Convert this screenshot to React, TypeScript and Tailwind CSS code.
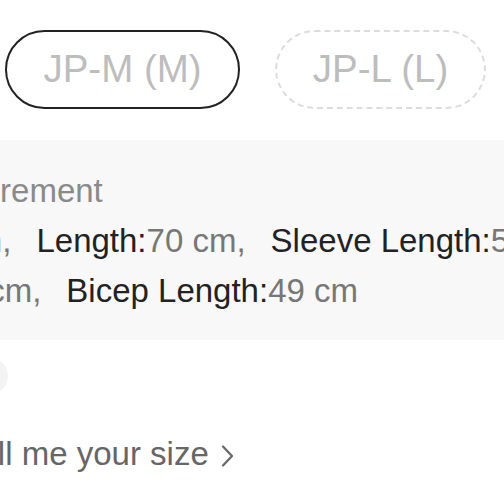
const font = { fontFamily: '"Liberation Sans", Arial, sans-serif' };

interface Measure {
  label: string;
  value: string;
}

const rowOne: Measure[] = [
  { label: 'Chest:', value: '56 cm' },
  { label: 'Length:', value: '70 cm' },
  { label: 'Sleeve Length:', value: '58 cm' },
];

const rowTwo: Measure[] = [
  { label: 'Shoulder:', value: '46 cm' },
  { label: 'Bicep Length:', value: '49 cm' },
];

function MeasureRow({ items, className }: { items: Measure[]; className: string }) {
  return (
    <div className={`flex gap-[25px] whitespace-nowrap leading-[50px] ${className}`}>
      {items.map((m, i) => (
        <span key={m.label}>
          <span className="text-[#222]">{m.label}</span>
          <span className="text-[#777]">
            {m.value}
            {i < items.length - 1 ? ',' : ''}
          </span>
        </span>
      ))}
    </div>
  );
}

export default function App() {
  return (
    <div className="w-[504px] h-[504px] overflow-hidden bg-white text-[33px]" style={font}>
      <div className="flex gap-[35px] pl-[5px] pt-[30px]">
        <div className="w-[235px] h-[79px] shrink-0 rounded-full border-[2.5px] border-[#222] flex items-center justify-center">
          <span className="text-[38.5px] leading-none text-[#bdbdbd]">JP-M (M)</span>
        </div>
        <div className="w-[211px] h-[79px] shrink-0 rounded-full border-2 border-dashed border-[#dcdcdc] flex items-center justify-center">
          <span className="text-[38.5px] leading-none text-[#bdbdbd]">JP-L (L)</span>
        </div>
      </div>

      <div className="mt-[31px] h-[200px] bg-[#f8f8f8] pt-[26px] overflow-hidden">
        <div className="leading-[50px] whitespace-nowrap text-[#8a8a8a] -ml-[99px]">Measurement</div>
        <MeasureRow items={rowOne} className="-ml-[183px]" />
        <MeasureRow items={rowTwo} className="-ml-[199px]" />
      </div>

      <div className="mt-[18px] -ml-[28px] w-[36px] h-[36px] rounded-full bg-[#f3f3f3]" />

      <div className="mt-[35px] -ml-[37px] flex items-center gap-[11px] leading-[50px] whitespace-nowrap text-[#666]">
        <span>Tell me your size</span>
        <svg width="15" height="24" viewBox="0 0 15 24" fill="none" className="mt-[4px]">
          <path d="M3 2.5 L12 12 L3 21.5" stroke="#666" strokeWidth="2.2" strokeLinecap="round" strokeLinejoin="round" />
        </svg>
      </div>
    </div>
  );
}
